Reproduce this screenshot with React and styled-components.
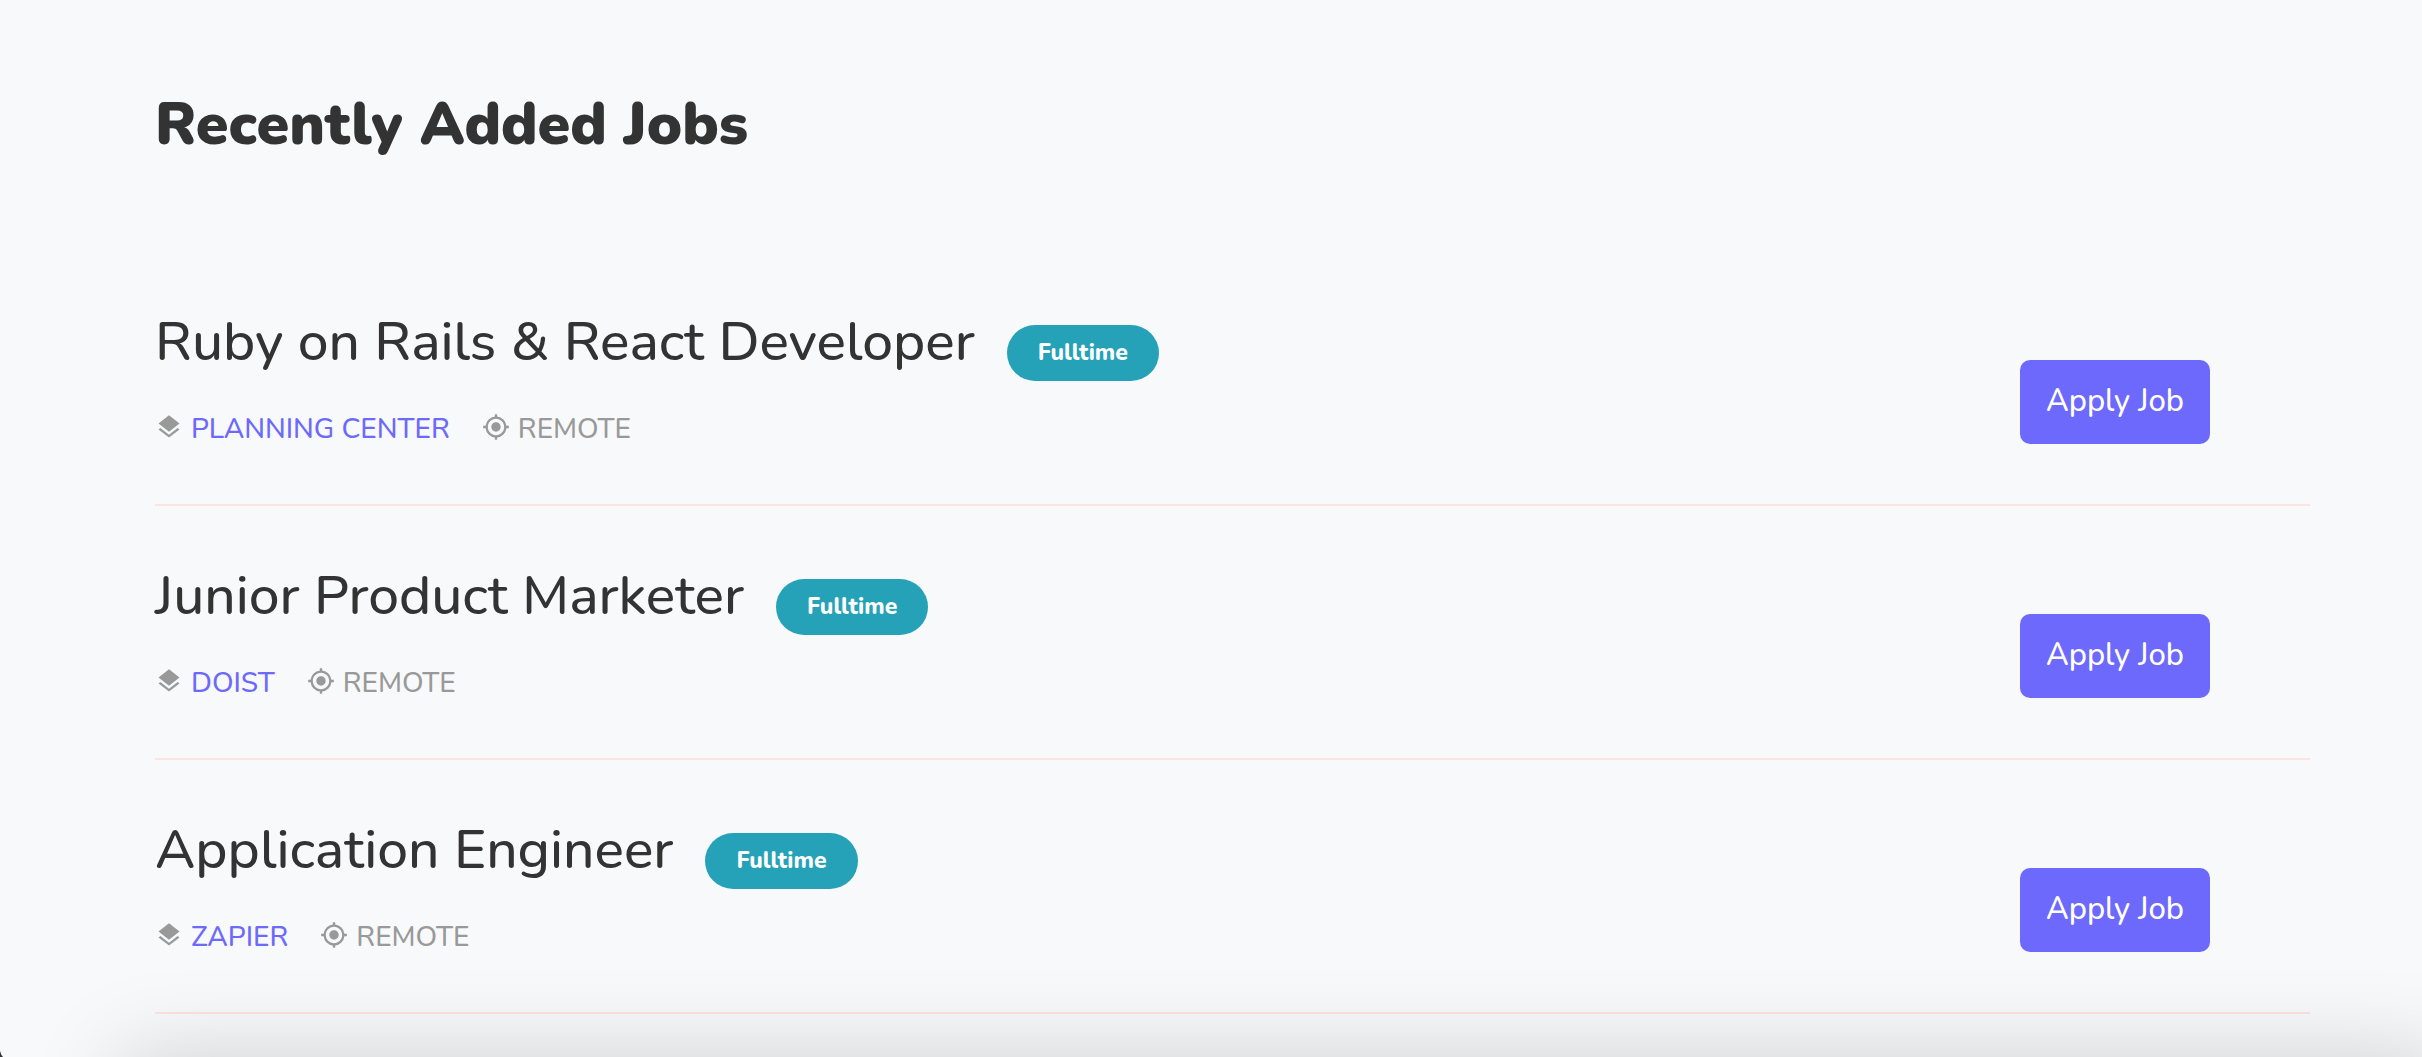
import React from "react";
import styled, { createGlobalStyle } from "styled-components";
import { MdLayers, MdGpsFixed } from "react-icons/md";

const GlobalStyle = createGlobalStyle`
  *, *::before, *::after { box-sizing: border-box; }
  body {
    margin: 0;
    background: #f8f9fb;
    color: #333333;
    font-family: Nunito, Lato, sans-serif;
    font-size: 28px;
    font-weight: 500;
    line-height: 42px;
    overflow: hidden;
  }
`;

const Page = styled.main`
  position: relative;
  min-height: 100vh;
  padding: 80px 112px 0 155px;
  overflow: hidden;
`;

const Heading = styled.h1`
  margin: 0 0 82px;
  font-size: 59px;
  line-height: 90px;
  font-weight: 900;
`;

const JobList = styled.ul`
  margin: 0;
  padding: 0;
  list-style: none;
`;

const JobRow = styled.li`
  display: flex;
  align-items: center;
  justify-content: space-between;
  padding: 48px 100px 0 0;
  border-bottom: 2px solid #fde4df;
`;

const JobInfo = styled.div`
  display: flex;
  flex-direction: column;
  gap: 24px;
  padding-bottom: 54px;
`;

const TitleLine = styled.div`
  display: flex;
  align-items: baseline;
  gap: 32px;
`;

const JobTitle = styled.h2`
  margin: 0;
  font-size: 55px;
  line-height: 84px;
  font-weight: 500;
`;

const Badge = styled.span`
  padding: 16px 31px;
  border-radius: 28px;
  background: #25a2b8;
  color: #ffffff;
  font-size: 23px;
  line-height: 24px;
  font-weight: 800;
`;

const Meta = styled.div`
  display: flex;
  gap: 32px;
  color: #999999;
`;

const MetaItem = styled.span`
  display: flex;
  align-items: center;
  gap: 8px;
  text-transform: uppercase;

  svg {
    width: 28px;
    height: 28px;
    margin-bottom: 4px;
  }
`;

const CompanyLink = styled.a`
  color: #6c69fc;
  text-decoration: none;
`;

const ApplyButton = styled.button`
  min-width: 190px;
  height: 84px;
  padding: 0 24px 2px;
  border: 0;
  border-radius: 10px;
  background: #6c69fc;
  color: #ffffff;
  font-family: inherit;
  font-size: 31px;
  font-weight: 500;
  cursor: pointer;
`;

const BottomShade = styled.div`
  position: absolute;
  top: 100%;
  left: 120px;
  right: -28px;
  height: 160px;
  box-shadow: 0 0 90px rgba(0, 0, 0, 0.17);
  pointer-events: none;
`;

const WindowCorner = styled.svg`
  position: absolute;
  left: 0;
  bottom: 0;
  width: 3px;
  height: 6px;
`;

const jobs = [
  { title: "Ruby on Rails & React Developer", company: "Planning Center" },
  { title: "Junior Product Marketer", company: "Doist" },
  { title: "Application Engineer", company: "Zapier" },
];

function Job({ title, company }) {
  return (
    <JobRow>
      <JobInfo>
        <TitleLine>
          <JobTitle>{title}</JobTitle>
          <Badge>Fulltime</Badge>
        </TitleLine>
        <Meta>
          <MetaItem>
            <MdLayers aria-hidden="true" />
            <CompanyLink href="#">{company}</CompanyLink>
          </MetaItem>
          <MetaItem>
            <MdGpsFixed aria-hidden="true" />
            <span>Remote</span>
          </MetaItem>
        </Meta>
      </JobInfo>
      <ApplyButton type="button">Apply Job</ApplyButton>
    </JobRow>
  );
}

export default function App() {
  return (
    <>
      <GlobalStyle />
      <Page>
        <Heading>Recently Added Jobs</Heading>
        <JobList>
          {jobs.map((job) => (
            <Job key={job.title} {...job} />
          ))}
        </JobList>
        <BottomShade />
        <WindowCorner viewBox="0 0 3 6" aria-hidden="true">
          <path d="M0 0 Q1 4 3 6 H0 Z" fill="#333333" />
        </WindowCorner>
      </Page>
    </>
  );
}
